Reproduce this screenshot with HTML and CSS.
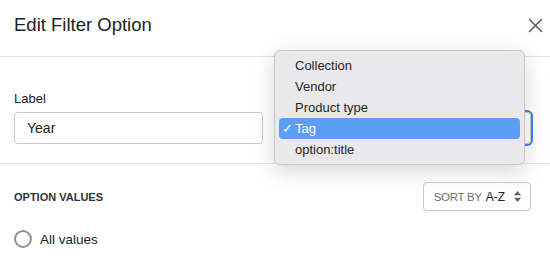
FILE: index.html
```html
<!DOCTYPE html>
<html lang="en">

<head>
    <meta charset="UTF-8">
    <meta name="viewport" content="width=device-width, initial-scale=1.0">
    <title>Edit Filter Option</title>
    <link rel="stylesheet" href="styles.css">
</head>

<body>
    <div class="modal">
        <div class="modal-header">
            <h2 class="modal-title">Edit Filter Option</h2>
            <button class="close-btn" aria-label="Close">
                <svg width="15" height="15" viewBox="0 0 15 15">
                    <path d="M1.5 1.5 L13.5 13.5 M13.5 1.5 L1.5 13.5" stroke="#5c5f62" stroke-width="1.6" fill="none" stroke-linecap="round"/>
                </svg>
            </button>
        </div>

        <div class="modal-section">
            <div class="field-row">
                <div class="field">
                    <label class="field-label">Label</label>
                    <div class="text-input">Year</div>
                </div>
                <div class="field">
                    <div class="select-box"></div>
                </div>
            </div>
        </div>

        <div class="modal-section values">
            <div class="values-head">
                <span class="values-title">OPTION VALUES</span>
                <button class="sort-btn">
                    <span class="sort-by">SORT BY</span>
                    <span class="sort-value">A-Z</span>
                    <svg width="7" height="11" viewBox="0 0 7 11">
                        <polygon points="3.5,0 7,4.3 0,4.3" fill="#5c5f62"/>
                        <polygon points="0,6.7 7,6.7 3.5,11" fill="#5c5f62"/>
                    </svg>
                </button>
            </div>
            <div class="radio-row">
                <span class="radio"></span>
                <span class="radio-label">All values</span>
            </div>
        </div>

        <!-- native select popup, open over the form -->
        <ul class="dropdown">
            <li>Collection</li>
            <li>Vendor</li>
            <li>Product type</li>
            <li class="selected">Tag</li>
            <li>option:title</li>
        </ul>
    </div>
</body>

</html>
```

FILE: styles.css
```css
body {
    font-family: "Liberation Sans", Arial, sans-serif;
    margin: 0;
    background-color: white;
    color: #202223;
}

.modal {
    position: relative;
    width: 550px;
    height: 257px;
    overflow: hidden;
}

.modal-header {
    display: flex;
    justify-content: space-between;
    align-items: center;
    height: 57px;
    box-sizing: border-box;
    padding: 0 7px 6px 14px;
    border-bottom: 1px solid #e1e3e5;
}

.modal-title {
    margin: 0;
    font-size: 18.5px;
    font-weight: normal;
    line-height: 24px;
}

.close-btn {
    display: flex;
    padding: 0;
    border: none;
    background: none;
}

.modal-section {
    padding: 32px 19px 19px 14px;
    border-bottom: 1px solid #e1e3e5;
}

.field-row {
    display: grid;
    grid-template-columns: 1fr 1fr;
    column-gap: 20px;
    align-items: end;
}

.field-label {
    display: block;
    font-size: 13px;
    line-height: 20px;
    margin-bottom: 3px;
}

.text-input {
    height: 32px;
    box-sizing: border-box;
    padding: 0 12px;
    border: 1px solid #c9cccf;
    border-radius: 4px;
    font-size: 14px;
    line-height: 30px;
}

.select-box {
    height: 32px;
    box-sizing: border-box;
    border: 1px solid #c9cccf;
    border-radius: 4px;
    box-shadow: 0 0 0 2px #3b7ff0;
}

.values {
    padding-top: 18px;
    border-bottom: none;
}

.values-head {
    display: flex;
    justify-content: space-between;
    align-items: center;
}

.values-title {
    font-size: 11px;
    font-weight: bold;
    color: #303234;
}

.sort-btn {
    display: flex;
    align-items: center;
    gap: 4px;
    height: 29px;
    padding: 0 9px 0 10px;
    border: 1px solid #c9cccf;
    border-radius: 4px;
    background: white;
    box-shadow: 0 1px 0 rgba(0, 0, 0, 0.05);
    font-family: inherit;
    font-size: 11.5px;
}

.sort-by {
    color: #6d7175;
    letter-spacing: -0.3px;
}

.sort-value {
    color: #202223;
    font-size: 12px;
    margin-right: 5px;
}

.radio-row {
    display: flex;
    align-items: center;
    gap: 8px;
    margin-top: 19px;
    height: 18px;
}

.radio {
    width: 18px;
    height: 18px;
    box-sizing: border-box;
    border: 2px solid #8c9196;
    border-radius: 50%;
}

.radio-label {
    font-size: 13.5px;
}

.dropdown {
    position: absolute;
    left: 274px;
    top: 50px;
    width: 251px;
    box-sizing: border-box;
    margin: 0;
    padding: 4px;
    list-style: none;
    background-color: #e9e8ea;
    border: 1px solid #c8c7ca;
    border-radius: 6px;
    box-shadow: 0 6px 22px rgba(0, 0, 0, 0.16);
    font-size: 13px;
    color: #262626;
}

.dropdown li {
    position: relative;
    line-height: 21px;
    padding-left: 16px;
    border-radius: 4px;
}

.dropdown li.selected {
    background-color: #5a9ef8;
    color: white;
}

.dropdown li.selected::before {
    content: "\2713";
    position: absolute;
    left: 3px;
    font-family: "DejaVu Sans", sans-serif;
    font-size: 13px;
    font-weight: bold;
}
```
